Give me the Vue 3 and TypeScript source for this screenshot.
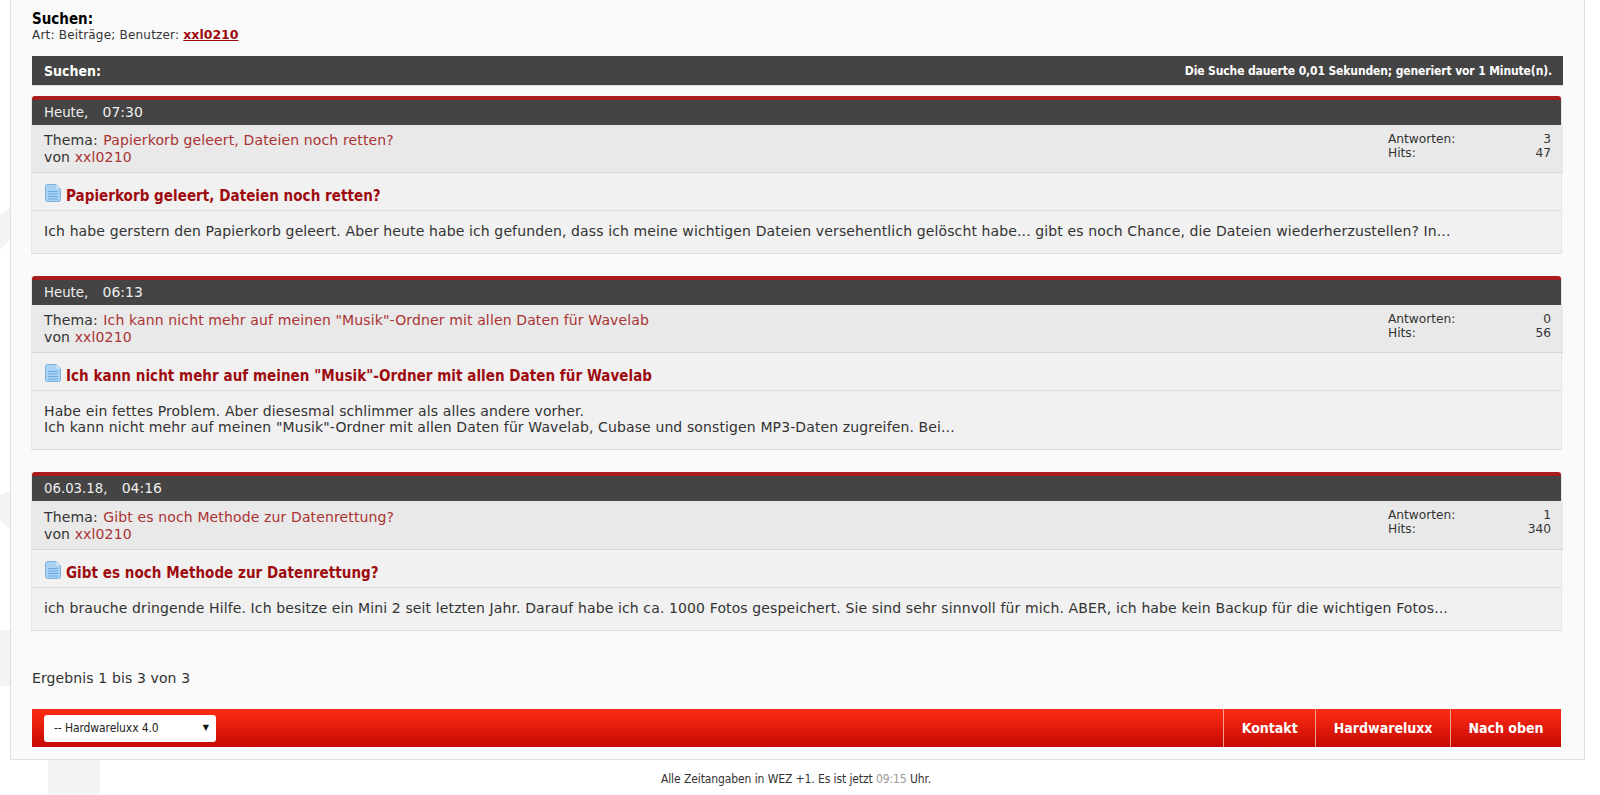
<script setup lang="ts">
interface Post {
  date: string
  time: string
  topic: string
  replies: number
  hits: number
  lines: string[]
}

const posts: Post[] = [
  {
    date: 'Heute',
    time: '07:30',
    topic: 'Papierkorb geleert, Dateien noch retten?',
    replies: 3,
    hits: 47,
    lines: [
      'Ich habe gerstern den Papierkorb geleert. Aber heute habe ich gefunden, dass ich meine wichtigen Dateien versehentlich gelöscht habe... gibt es noch Chance, die Dateien wiederherzustellen? In...'
    ]
  },
  {
    date: 'Heute',
    time: '06:13',
    topic: 'Ich kann nicht mehr auf meinen "Musik"-Ordner mit allen Daten für Wavelab',
    replies: 0,
    hits: 56,
    lines: [
      'Habe ein fettes Problem. Aber diesesmal schlimmer als alles andere vorher.',
      'Ich kann nicht mehr auf meinen "Musik"-Ordner mit allen Daten für Wavelab, Cubase und sonstigen MP3-Daten zugreifen. Bei...'
    ]
  },
  {
    date: '06.03.18',
    time: '04:16',
    topic: 'Gibt es noch Methode zur Datenrettung?',
    replies: 1,
    hits: 340,
    lines: [
      'ich brauche dringende Hilfe. Ich besitze ein Mini 2 seit letzten Jahr. Darauf habe ich ca. 1000 Fotos gespeichert. Sie sind sehr sinnvoll für mich. ABER, ich habe kein Backup für die wichtigen Fotos...'
    ]
  }
]

const footerLinks = ['Kontakt', 'Hardwareluxx', 'Nach oben']
</script>

<template>
  <div class="page">
    <svg class="watermark" width="1600" height="795" viewBox="0 0 1600 795" aria-hidden="true">
      <path d="M0 215 L10 208 V240 L0 250Z M0 495 L10 490 V530 L0 520Z M0 630 H10 V686 H0Z M48 759 H100 V795 H48Z" fill="#f3f3f3" />
    </svg>

    <main class="panel">
      <header class="heading">
        <h1>Suchen:</h1>
        <p>Art: Beiträge; Benutzer: <a href="#">xxl0210</a></p>
      </header>

      <div class="search-bar">
        <span class="search-title">Suchen:</span>
        <span class="search-info">Die Suche dauerte 0,01 Sekunden; generiert vor 1 Minute(n).</span>
      </div>

      <article v-for="post in posts" :key="post.time" class="post">
        <div class="post-date">{{ post.date }}, <span class="post-time">{{ post.time }}</span></div>
        <div class="post-meta">
          <div class="post-topic">
            <div>Thema: <a class="topic-link" href="#">{{ post.topic }}</a></div>
            <div>von <a href="#">xxl0210</a></div>
          </div>
          <dl class="post-stats">
            <dt>Antworten:</dt>
            <dd>{{ post.replies }}</dd>
            <dt>Hits:</dt>
            <dd>{{ post.hits }}</dd>
          </dl>
        </div>
        <h2 class="post-title">
          <svg class="doc-icon" width="16" height="18" viewBox="0 0 16 18">
            <path d="M2.5.5H11L15.5 5V15.5a2 2 0 0 1-2 2H2.5a2 2 0 0 1-2-2V2.5a2 2 0 0 1 2-2Z" fill="#a9d3f5" stroke="#7fb0dc" />
            <path d="M11 .5V5h4.5Z" fill="#dcedfb" stroke="#9cc4e6" stroke-width=".6" />
            <path d="M3 7.5h10M3 10h10M3 12.5h10M3 15h10" stroke="#6aaae2" />
          </svg>
          <a href="#">{{ post.topic }}</a>
        </h2>
        <div class="post-body">
          <div v-for="line in post.lines" :key="line">{{ line }}</div>
        </div>
      </article>

      <div class="result-count">Ergebnis 1 bis 3 von 3</div>

      <nav class="footer-bar">
        <div class="style-select">
          <select>
            <option>-- Hardwareluxx 4.0</option>
          </select>
          <span class="select-arrow">▼</span>
        </div>
        <ul class="footer-links">
          <li v-for="link in footerLinks" :key="link"><a href="#">{{ link }}</a></li>
        </ul>
      </nav>
    </main>

    <footer class="timezone">Alle Zeitangaben in WEZ +1. Es ist jetzt <span>09:15</span> Uhr.</footer>
  </div>
</template>

<style>
html,
body {
  background: #fff;
}
</style>

<style scoped>
.page {
  position: relative;
  width: 1600px;
  height: 795px;
  overflow: hidden;
  font-family: "DejaVu Sans", Verdana, sans-serif;
  font-size: 13px;
  color: #333;
}

.watermark {
  position: absolute;
  left: 0;
  top: 0;
}

a {
  color: #a33;
  text-decoration: none;
}

.panel {
  position: relative;
  box-sizing: border-box;
  width: 1575px;
  height: 760px;
  margin-left: 10px;
  padding: 0 21px;
  background: #fafafa;
  border: 1px solid #e0e0e0;
  border-top: 0;
}

.heading {
  height: 56px;
  padding-top: 11px;
  box-sizing: border-box;
}

.heading h1 {
  margin: 0;
  font-family: "DejaVu Sans Condensed", "DejaVu Sans", sans-serif;
  font-size: 15px;
  line-height: 16px;
  color: #000;
}

.heading p {
  margin: 1px 0 0;
  font-size: 12px;
  line-height: 14px;
  letter-spacing: 0.2px;
}

.heading a {
  font-size: 12.5px;
  font-weight: bold;
  letter-spacing: 0;
  color: #9e0b0f;
  text-decoration: underline;
}

.search-bar {
  display: flex;
  justify-content: space-between;
  align-items: center;
  height: 29px;
  padding: 0 11px 0 12px;
  background: #444;
  color: #fff;
  font-family: "DejaVu Sans Condensed", "DejaVu Sans", sans-serif;
  font-weight: bold;
  box-shadow: 0 1px 0 #ddd;
}

.search-title {
  font-size: 14px;
}

.search-info {
  font-size: 12px;
  letter-spacing: -0.12px;
}

.post {
  margin: 11px 2px 22px 0;
  border-bottom: 1px solid #ddd;
  background: #f1f1f1;
  box-shadow: 1px 0 0 #e4e4e4, -1px 0 0 #e8e8e8;
}

.post:last-of-type {
  margin-bottom: 0;
}

.post + .post {
  margin-top: 22px;
}

.post-date {
  height: 25px;
  padding: 0 12px;
  border-top: 4px solid #a81c1c;
  border-radius: 3px 3px 0 0;
  background: #444;
  color: #eee;
  font-size: 13.3px;
  line-height: 25px;
}

.post-time {
  margin-left: 10px;
  font-size: 14px;
}

.post-meta {
  display: flex;
  justify-content: space-between;
  box-sizing: border-box;
  height: 48px;
  margin-right: -2px;
  padding: 7px 12px 0;
  background: #e9e9e9;
  border-bottom: 1px solid #d8d8d8;
  line-height: 17px;
  font-size: 14px;
  letter-spacing: 0.13px;
}

.post:last-of-type .post-meta {
  height: 49px;
}

.post:last-of-type .post-topic {
  margin-top: 1px;
}

.topic-link {
  margin-left: 1px;
}

.post-stats {
  display: grid;
  grid-template-columns: 1fr auto;
  align-content: start;
  width: 163px;
  margin: 0;
  font-size: 12.2px;
  line-height: 14px;
  letter-spacing: 0;
}

.post-stats dd {
  margin: 0;
  text-align: right;
}

.post-title {
  display: flex;
  align-items: center;
  gap: 5px;
  box-sizing: border-box;
  height: 38px;
  margin: 0;
  padding: 7px 12px 0 13px;
  border-bottom: 1px solid #ddd;
  font-family: "DejaVu Sans Condensed", "DejaVu Sans", sans-serif;
  font-size: 15px;
  letter-spacing: 0.05px;
}

.post-title a {
  margin-top: 2px;
  color: #9e0b0f;
}

.doc-icon {
  margin-top: -4px;
  flex: none;
}

.post-body {
  padding: 12px 12px 14px;
  font-size: 14px;
  line-height: 16px;
  letter-spacing: 0.12px;
}

.result-count {
  margin-top: 38px;
  font-size: 14px;
  line-height: 18px;
  letter-spacing: 0.12px;
}

.footer-bar {
  display: flex;
  justify-content: space-between;
  align-items: stretch;
  height: 38px;
  margin: 22px 2px 0 0;
  background: linear-gradient(#ff2c14, #c40a04);
}

.style-select {
  position: relative;
  align-self: center;
  margin-left: 12px;
}

.style-select select {
  display: block;
  appearance: none;
  width: 172px;
  height: 27px;
  padding: 0 10px;
  border: 0;
  border-radius: 3px;
  background: #fff;
  color: #222;
  font-family: "DejaVu Sans Condensed", "DejaVu Sans", sans-serif;
  font-size: 12px;
  letter-spacing: -0.1px;
}

.select-arrow {
  position: absolute;
  right: 7px;
  top: 8px;
  font-size: 8px;
  color: #111;
  pointer-events: none;
}

.footer-links {
  display: flex;
  margin: 0;
  padding: 0;
  list-style: none;
}

.footer-links li {
  display: flex;
  align-items: center;
  padding: 0 17.5px;
  border-left: 1px solid #f0a090;
}

.footer-links a {
  color: #fff;
  font-family: "DejaVu Sans Condensed", "DejaVu Sans", sans-serif;
  font-size: 14px;
  font-weight: bold;
}

.timezone {
  position: relative;
  margin-top: 11px;
  padding-right: 8px;
  text-align: center;
  font-family: "DejaVu Sans Condensed", "DejaVu Sans", sans-serif;
  font-size: 12px;
  line-height: 16px;
  letter-spacing: -0.1px;
}

.timezone span {
  color: #999;
}
</style>
